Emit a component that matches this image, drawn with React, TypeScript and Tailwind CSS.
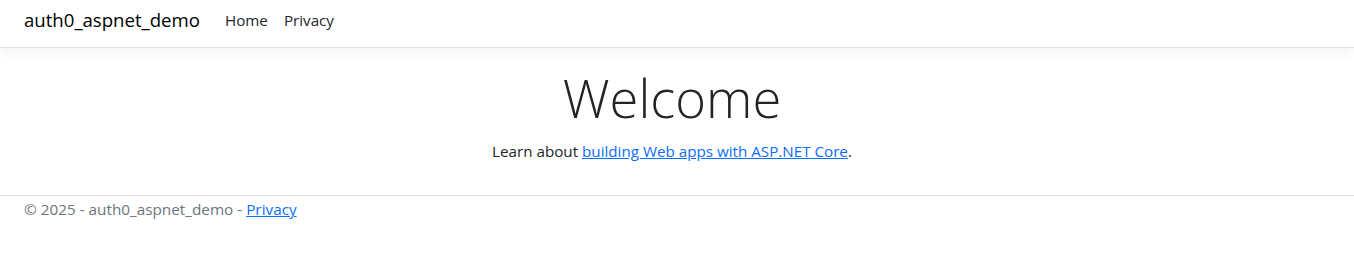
export default function App() {
  const font = { fontFamily: '"Open Sans", "Noto Sans", sans-serif' };
  return (
    <div className="min-h-[258px] bg-white text-[#212529]" style={font}>
      <nav className="h-[48px] border-b border-[#dee2e6] bg-white shadow-[0_4px_12px_rgba(0,0,0,0.05)] flex items-center px-[24px] pb-[7px]">
        <a className="text-[18.6px] leading-[30px] text-black mr-[17px]" href="#">auth0_aspnet_demo</a>
        <div className="flex items-center">
          <a className="px-[8px] text-[15.2px] leading-[24px] text-[#212529]" href="#">Home</a>
          <a className="px-[8px] text-[15.2px] leading-[24px] text-[#212529]" href="#">Privacy</a>
        </div>
      </nav>
      <main className="pt-[16px] pb-[16px] pr-[10px] text-center">
        <h1 className="text-[52.5px] leading-[67px] font-light mb-[8px]">Welcome</h1>
        <p className="text-[15.2px] leading-[24px] mb-[16px]">
          Learn about{" "}
          <a className="text-[#0d6efd] underline" href="#">building Web apps with ASP.NET Core</a>.
        </p>
      </main>
      <footer className="border-t border-[#dee2e6] px-[24px] text-[15.3px] leading-[24px] text-[#6c757d] pt-[1px]">
        © 2025 - auth0_aspnet_demo - <a className="text-[#0d6efd] underline" href="#">Privacy</a>
      </footer>
    </div>
  );
}
